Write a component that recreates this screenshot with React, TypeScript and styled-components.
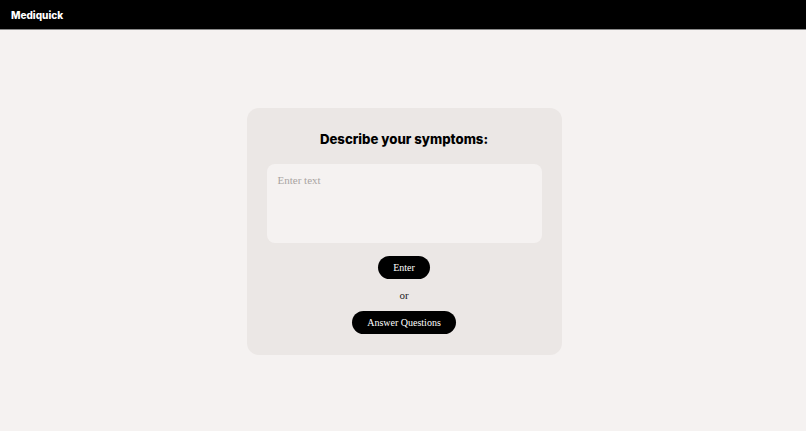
import styled, { createGlobalStyle } from 'styled-components';

const GlobalStyle = createGlobalStyle`
  * {
    box-sizing: border-box;
  }
  body {
    margin: 0;
    background: #f5f2f1;
    font-family: 'Liberation Serif', 'DejaVu Serif', serif;
  }
`;

export default function App() {
  return (
    <>
      <GlobalStyle />
      <Header>
        <Logo>Mediquick</Logo>
      </Header>
      <Main>
        <Card>
          <Title>Describe your symptoms:</Title>
          <TextArea placeholder="Enter text" />
          <PillButton>Enter</PillButton>
          <OrText>or</OrText>
          <PillButton>Answer Questions</PillButton>
        </Card>
      </Main>
    </>
  );
}

const Header = styled.header`
  height: 30px;
  background: #000;
  border-bottom: 1px solid #8a8a8a;
  display: flex;
  align-items: center;
  padding: 0 11px;
`;

const Logo = styled.div`
  color: #fff;
  font-family: 'Inter', 'Open Sans', sans-serif;
  font-weight: 800;
  font-size: 10px;
`;

const Main = styled.main`
  min-height: calc(100vh - 30px);
  display: flex;
  align-items: center;
  justify-content: center;
  padding: 2px 0 0 2px;
`;

const Card = styled.section`
  width: 315px;
  background: #ebe7e5;
  border-radius: 12px;
  padding: 20px 20px 21px;
  display: flex;
  flex-direction: column;
  align-items: center;
`;

const Title = styled.h2`
  margin: 0 0 14px;
  font-family: 'Inter', 'Open Sans', sans-serif;
  font-weight: 800;
  font-size: 13.2px;
  line-height: 22px;
  color: #000;
`;

const TextArea = styled.textarea`
  width: 100%;
  height: 79px;
  border: none;
  outline: none;
  resize: none;
  border-radius: 8px;
  background: #f5f2f1;
  padding: 10px 11px;
  font-family: 'Liberation Serif', 'DejaVu Serif', serif;
  font-size: 11px;
  color: #333;
  margin-bottom: 13px;

  &::placeholder {
    color: #a9a4a2;
  }
`;

const PillButton = styled.button`
  height: 23px;
  padding: 0 15px;
  border: none;
  border-radius: 12px;
  background: #000;
  color: #fff;
  font-family: 'Liberation Serif', 'DejaVu Serif', serif;
  font-size: 10px;
  cursor: pointer;
`;

const OrText = styled.div`
  font-size: 11px;
  line-height: 14px;
  color: #222;
  margin: 9px 0 9px;
`;
